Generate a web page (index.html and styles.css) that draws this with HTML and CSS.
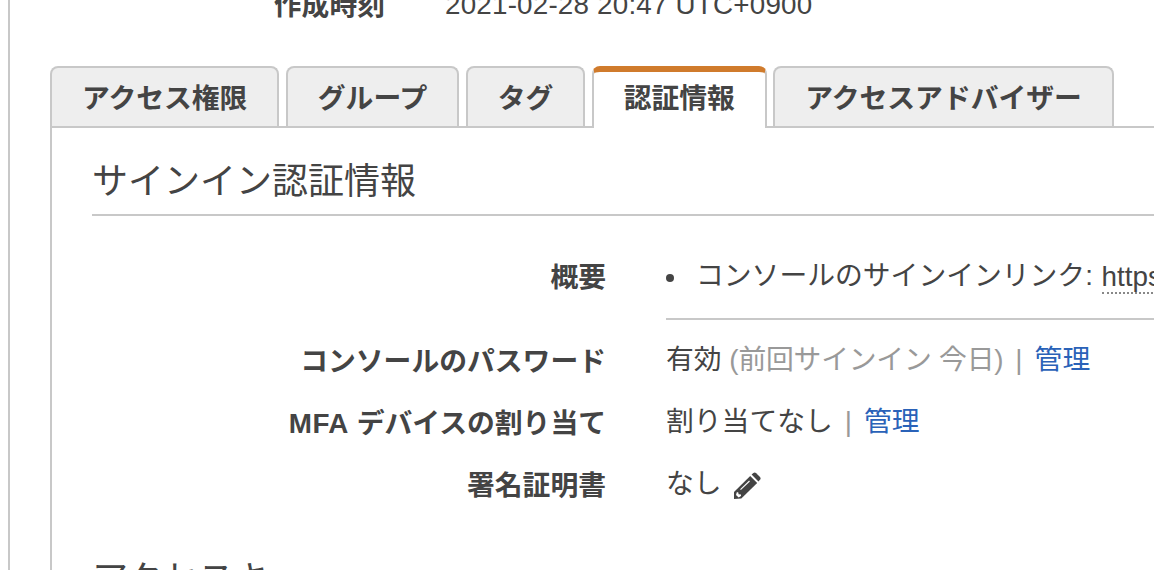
FILE: index.html
```html
<!DOCTYPE html>
<html lang="ja">
<head>
    <meta charset="UTF-8">
    <meta name="viewport" content="width=device-width, initial-scale=1.0">
    <title>認証情報</title>
    <link rel="stylesheet" href="styles.css">
</head>
<body>
    <div class="container">
        <div class="summary">
            <div class="summary-label">作成時刻</div>
            <div class="summary-value">2021-02-28 20:47 UTC+0900</div>
        </div>

        <div class="tabs">
            <div class="tab">アクセス権限</div>
            <div class="tab">グループ</div>
            <div class="tab">タグ</div>
            <div class="tab active">認証情報</div>
            <div class="tab">アクセスアドバイザー</div>
        </div>

        <div class="tab-content">
            <h2>サインイン認証情報</h2>

            <div class="row row-overview">
                <div class="label">概要</div>
                <div class="value overview">
                    <ul>
                        <li>コンソールのサインインリンク: <span class="url">https://</span></li>
                    </ul>
                </div>
            </div>
            <div class="row">
                <div class="label">コンソールのパスワード</div>
                <div class="value">有効 <span class="muted">(前回サインイン 今日)</span><span class="divider">|</span><a href="#">管理</a></div>
            </div>
            <div class="row">
                <div class="label"><span class="latin">MFA</span> デバイスの割り当て</div>
                <div class="value">割り当てなし<span class="divider">|</span><a href="#">管理</a></div>
            </div>
            <div class="row">
                <div class="label">署名証明書</div>
                <div class="value">なし
                    <svg class="pencil" width="28" height="28" viewBox="0 0 28 28">
                        <path fill="#444" d="M17.2 4 L24.2 11 L8.3 26.4 L1 27 L1 20 Z"/>
                        <path fill="#444" d="M18.6 2.6 L20.4 1 Q21.8 0 23.2 1.2 L27 5 Q28.2 6.5 27 7.8 L25.4 9.5 Z"/>
                        <path fill="#fff" d="M3.8 20.2 L5.2 20.2 L5.6 22.2 L8 22.6 L8 24 L5.6 25.4 L3 23 Z"/>
                        <path stroke="#fff" stroke-width="1.1" d="M7.5 17.6 L16.5 9"/>
                    </svg>
                </div>
            </div>

            <h2 class="next">アクセスキー</h2>
        </div>
    </div>
</body>
</html>
```

FILE: styles.css
```css
body {
    margin: 0;
    height: 570px;
    overflow: hidden;
    background-color: #fff;
    color: #444;
    font-family: "Liberation Sans", "Noto Sans CJK JP", sans-serif;
    font-size: 27.8px;
    line-height: 42px;
}
.container {
    margin-left: 8px;
    padding-left: 40px;
    border-left: 2px solid #c8c8c8;
}
.summary {
    display: flex;
    gap: 60px;
    height: 66px;
}
.summary-label {
    width: 335px;
    margin-top: -15px;
    text-align: right;
    font-weight: bold;
}
.summary-value {
    margin-top: -16px;
    letter-spacing: 0.2px;
}
.tabs {
    display: flex;
    gap: 6.4px;
    height: 62px;
    margin-bottom: -2px;
}
.tab {
    box-sizing: border-box;
    height: 60px;
    padding: 12px 30px 0;
    border: 2px solid #c8c8c8;
    border-bottom: none;
    border-radius: 8px 8px 0 0;
    background-color: #eee;
    line-height: 38px;
    font-weight: bold;
    white-space: nowrap;
}
.tab.active {
    height: 62px;
    padding-top: 8px;
    border-top: 6px solid #d07b2c;
    background-color: #fff;
    z-index: 1;
}
.tab-content {
    padding: 26px 0 0 40px;
    border-top: 2px solid #c8c8c8;
    border-left: 2px solid #c8c8c8;
}
h2 {
    box-sizing: border-box;
    height: 62px;
    margin: 0 0 40px;
    padding-top: 2px;
    border-bottom: 2px solid #c8c8c8;
    font-size: 36px;
    line-height: 52px;
    font-weight: normal;
}
.row {
    display: flex;
    gap: 60px;
    height: 42px;
    margin-bottom: 20px;
}
.row-overview {
    height: 64px;
}
.label {
    width: 514px;
    padding-top: 1px;
    text-align: right;
    font-weight: bold;
}
.latin {
    letter-spacing: 0.5px;
}
.value {
    margin-top: -1px;
    white-space: nowrap;
}
.overview {
    flex: 1;
    min-width: 0;
    height: 63px;
    border-bottom: 2px solid #c8c8c8;
}
ul {
    margin: 0;
    padding: 0;
    list-style: none;
}
li {
    display: flex;
    align-items: center;
    white-space: pre;
}
li::before {
    content: "";
    width: 8px;
    height: 8px;
    margin: 4px 22px 0 0;
    border-radius: 50%;
    background-color: #444;
    flex-shrink: 0;
}
.url {
    height: 32px;
    line-height: 34px;
    margin-top: 2px;
    margin-left: 1px;
    border-bottom: 2px dotted #888;
}
.muted {
    letter-spacing: -0.2px;
    color: #999;
}
.divider {
    margin: 0 12px;
    color: #999;
}
a {
    color: #2a62b8;
    text-decoration: none;
}
.pencil {
    margin-left: 4px;
    vertical-align: -7px;
}
.next {
    margin-top: 46px;
}
```
